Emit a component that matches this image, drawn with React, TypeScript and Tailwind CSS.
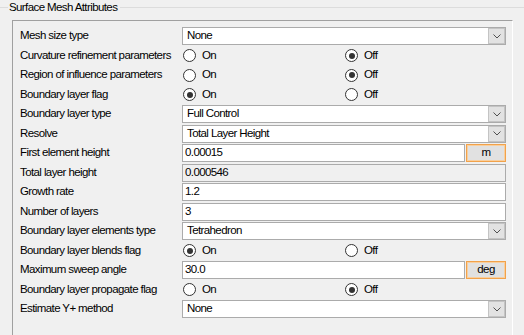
type Row =
    | { label: string; kind: "select"; value: string }
    | { label: string; kind: "radio"; on: boolean }
    | { label: string; kind: "text"; value: string; unit?: string; readOnly?: boolean };

const rows: Row[] = [
    { label: "Mesh size type", kind: "select", value: "None" },
    { label: "Curvature refinement parameters", kind: "radio", on: false },
    { label: "Region of influence parameters", kind: "radio", on: false },
    { label: "Boundary layer flag", kind: "radio", on: true },
    { label: "Boundary layer type", kind: "select", value: "Full Control" },
    { label: "Resolve", kind: "select", value: "Total Layer Height" },
    { label: "First element height", kind: "text", value: "0.00015", unit: "m" },
    { label: "Total layer height", kind: "text", value: "0.000546", readOnly: true },
    { label: "Growth rate", kind: "text", value: "1.2" },
    { label: "Number of layers", kind: "text", value: "3" },
    { label: "Boundary layer elements type", kind: "select", value: "Tetrahedron" },
    { label: "Boundary layer blends flag", kind: "radio", on: true },
    { label: "Maximum sweep angle", kind: "text", value: "30.0", unit: "deg" },
    { label: "Boundary layer propagate flag", kind: "radio", on: false },
    { label: "Estimate Y+ method", kind: "select", value: "None" },
];

const Radio = ({ checked, text }: { checked: boolean; text: string }) => (
    <div className="flex items-center h-full">
        <span className="ml-[1px] flex h-[13px] w-[13px] items-center justify-center rounded-full border border-[#333333] bg-white">
            {checked && <span className="h-[6px] w-[6px] rounded-full bg-[#333333]" />}
        </span>
        <span className="ml-[6px]">{text}</span>
    </div>
);

const Select = ({ value }: { value: string }) => (
    <div className="flex h-full w-full border border-[#ababab] bg-white">
        <span className="flex flex-1 items-center pl-[4px]">{value}</span>
        <span className="flex w-[17px] items-center justify-center border border-[#c4c4c4] bg-[#e2e2e2]">
            <svg width="8" height="5" viewBox="0 0 8 5">
                <path d="M0.5 0.5 L4 4 L7.5 0.5" fill="none" stroke="#505050" strokeWidth="1" />
            </svg>
        </span>
    </div>
);

const Control = ({ row }: { row: Row }) => {
    if (row.kind === "select") return <Select value={row.value} />;
    if (row.kind === "radio")
        return (
            <div className="grid h-full grid-cols-2">
                <Radio checked={row.on} text="On" />
                <Radio checked={!row.on} text="Off" />
            </div>
        );
    return (
        <div className="flex h-full gap-[1px]">
            <div
                className={`flex flex-1 items-center border border-[#ababab] pl-[2px] ${
                    row.readOnly ? "bg-[#f0f0f0]" : "bg-white"
                }`}
            >
                {row.value}
            </div>
            {row.unit && (
                <div className="flex w-[40px] items-center justify-center border border-[#f2a24a] bg-[#e1e1e1] shadow-[inset_0_0_0_1px_#f8cf9f]">
                    {row.unit}
                </div>
            )}
        </div>
    );
};

export default function App() {
    return (
        <div className="h-[335px] w-[524px] overflow-hidden bg-[#f0f0f0] font-['Liberation_Sans',Arial,sans-serif] text-[11.5px] tracking-[-0.6px] text-black">
            {/* Group box caption */}
            <div className="flex h-[15px] items-center">
                <div className="h-px w-[8px] bg-[#dcdcdc]" />
                <span className="px-[1px] leading-none">Surface Mesh Attributes</span>
                <div className="ml-[2px] h-px flex-1 bg-[#dcdcdc]" />
            </div>

            {/* Inner panel */}
            <div className="ml-[12px] mt-[5px] h-[400px] w-[501px] border-l border-t border-r border-[#a0a0a0] border-r-white pl-[7px] pt-[6px]">
                {rows.map((row) => (
                    <div key={row.label} className="flex h-[19.5px]">
                        <div className="flex h-[18px] w-[162px] items-center">{row.label}</div>
                        <div className="h-[18px] w-[324px]">
                            <Control row={row} />
                        </div>
                    </div>
                ))}
            </div>
        </div>
    );
}
